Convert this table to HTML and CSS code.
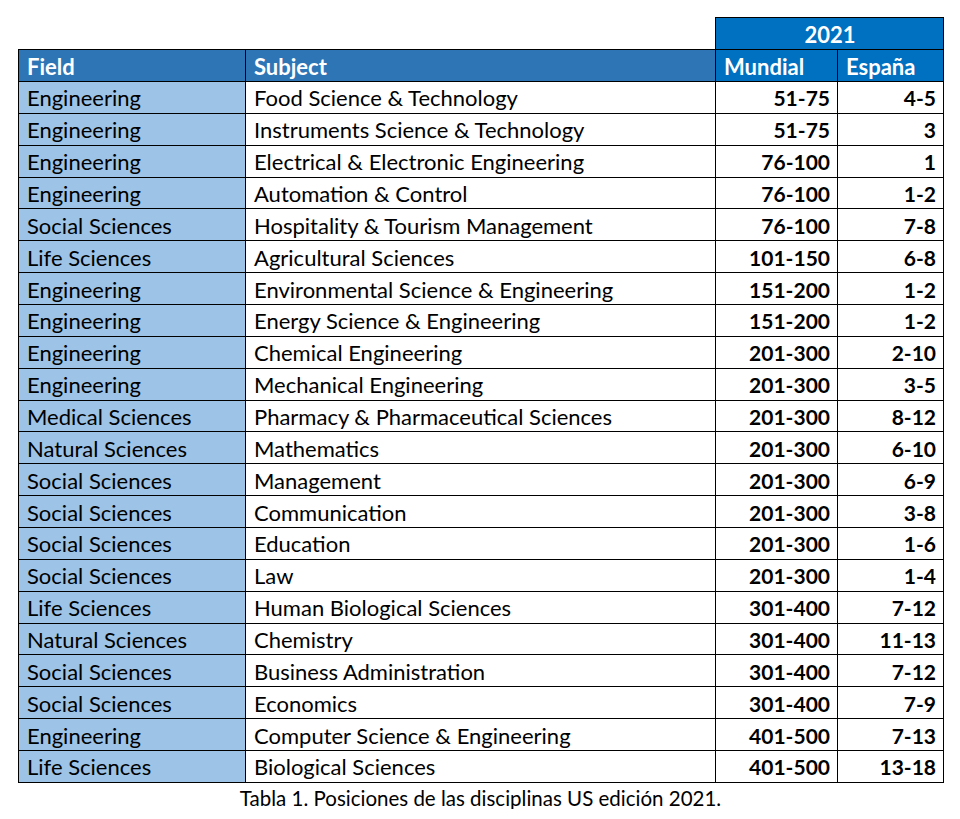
FILE: index.html
```html
<!DOCTYPE html>
<html lang="es">
<head>
<meta charset="utf-8">
<title>Tabla 1</title>
<link rel="stylesheet" href="styles.css">
</head>
<body>
<figure class="fig">
<table class="rank">
<colgroup>
<col class="c-field"><col class="c-subject"><col class="c-mundial"><col class="c-espana">
</colgroup>
<thead>
<tr class="year-row"><td class="blank" colspan="2"></td><th class="year" colspan="2">2021</th></tr>
<tr class="head-row"><th class="h-left">Field</th><th class="h-left">Subject</th><th class="h-num">Mundial</th><th class="h-num">España</th></tr>
</thead>
<tbody>
<tr><td class="field">Engineering</td><td>Food Science &amp; Technology</td><td class="num">51-75</td><td class="num">4-5</td></tr>
<tr><td class="field">Engineering</td><td>Instruments Science &amp; Technology</td><td class="num">51-75</td><td class="num">3</td></tr>
<tr><td class="field">Engineering</td><td>Electrical &amp; Electronic Engineering</td><td class="num">76-100</td><td class="num">1</td></tr>
<tr><td class="field">Engineering</td><td>Automation &amp; Control</td><td class="num">76-100</td><td class="num">1-2</td></tr>
<tr><td class="field">Social Sciences</td><td>Hospitality &amp; Tourism Management</td><td class="num">76-100</td><td class="num">7-8</td></tr>
<tr><td class="field">Life Sciences</td><td>Agricultural Sciences</td><td class="num">101-150</td><td class="num">6-8</td></tr>
<tr><td class="field">Engineering</td><td>Environmental Science &amp; Engineering</td><td class="num">151-200</td><td class="num">1-2</td></tr>
<tr><td class="field">Engineering</td><td>Energy Science &amp; Engineering</td><td class="num">151-200</td><td class="num">1-2</td></tr>
<tr><td class="field">Engineering</td><td>Chemical Engineering</td><td class="num">201-300</td><td class="num">2-10</td></tr>
<tr><td class="field">Engineering</td><td>Mechanical Engineering</td><td class="num">201-300</td><td class="num">3-5</td></tr>
<tr><td class="field">Medical Sciences</td><td>Pharmacy &amp; Pharmaceutical Sciences</td><td class="num">201-300</td><td class="num">8-12</td></tr>
<tr><td class="field">Natural Sciences</td><td>Mathematics</td><td class="num">201-300</td><td class="num">6-10</td></tr>
<tr><td class="field">Social Sciences</td><td>Management</td><td class="num">201-300</td><td class="num">6-9</td></tr>
<tr><td class="field">Social Sciences</td><td>Communication</td><td class="num">201-300</td><td class="num">3-8</td></tr>
<tr><td class="field">Social Sciences</td><td>Education</td><td class="num">201-300</td><td class="num">1-6</td></tr>
<tr><td class="field">Social Sciences</td><td>Law</td><td class="num">201-300</td><td class="num">1-4</td></tr>
<tr><td class="field">Life Sciences</td><td>Human Biological Sciences</td><td class="num">301-400</td><td class="num">7-12</td></tr>
<tr><td class="field">Natural Sciences</td><td>Chemistry</td><td class="num">301-400</td><td class="num">11-13</td></tr>
<tr><td class="field">Social Sciences</td><td>Business Administration</td><td class="num">301-400</td><td class="num">7-12</td></tr>
<tr><td class="field">Social Sciences</td><td>Economics</td><td class="num">301-400</td><td class="num">7-9</td></tr>
<tr><td class="field">Engineering</td><td>Computer Science &amp; Engineering</td><td class="num">401-500</td><td class="num">7-13</td></tr>
<tr><td class="field">Life Sciences</td><td>Biological Sciences</td><td class="num">401-500</td><td class="num">13-18</td></tr>
</tbody>
</table>
<figcaption class="caption">Tabla 1. Posiciones de las disciplinas US edición 2021.</figcaption>
</figure>
</body>
</html>
```
FILE: styles.css
```css
html, body {
  margin: 0;
  padding: 0;
  background: #ffffff;
}
body {
  font-family: Lato, "Open Sans", "Liberation Sans", sans-serif;
  color: #000000;
}
.fig {
  margin: 0;
  padding: 17px 0 0 18px;
  width: 925px;
}
.rank {
  border-collapse: collapse;
  table-layout: fixed;
  width: 925px;
  font-size: 22px;
}
.c-field { width: 227px; }
.c-subject { width: 470px; }
.c-mundial { width: 122px; }
.c-espana { width: 106px; }
.rank th, .rank td {
  border: 1px solid #000000;
  height: 31.86px;
  padding: 2px 7px 0 8px;
  box-sizing: border-box;
  white-space: nowrap;
  line-height: 22px;
}
.rank td.blank {
  border: none;
  background: transparent;
}
.year-row th.year {
  background: #0070c0;
  color: #ffffff;
  font-weight: bold;
  text-align: center;
  height: 32px;
}
.head-row th {
  color: #ffffff;
  font-weight: bold;
  height: 32px;
}
.head-row th.h-left {
  background: #2e75b6;
  text-align: left;
}
.head-row th.h-num {
  background: #0070c0;
  text-align: left;
}
.rank td.field {
  background: #9dc3e6;
}
.rank td.num {
  text-align: right;
  font-weight: bold;
  font-size: 21px;
}
.caption {
  text-align: center;
  font-size: 20.5px;
  margin-top: 4px;
  line-height: 22px;
}
```
